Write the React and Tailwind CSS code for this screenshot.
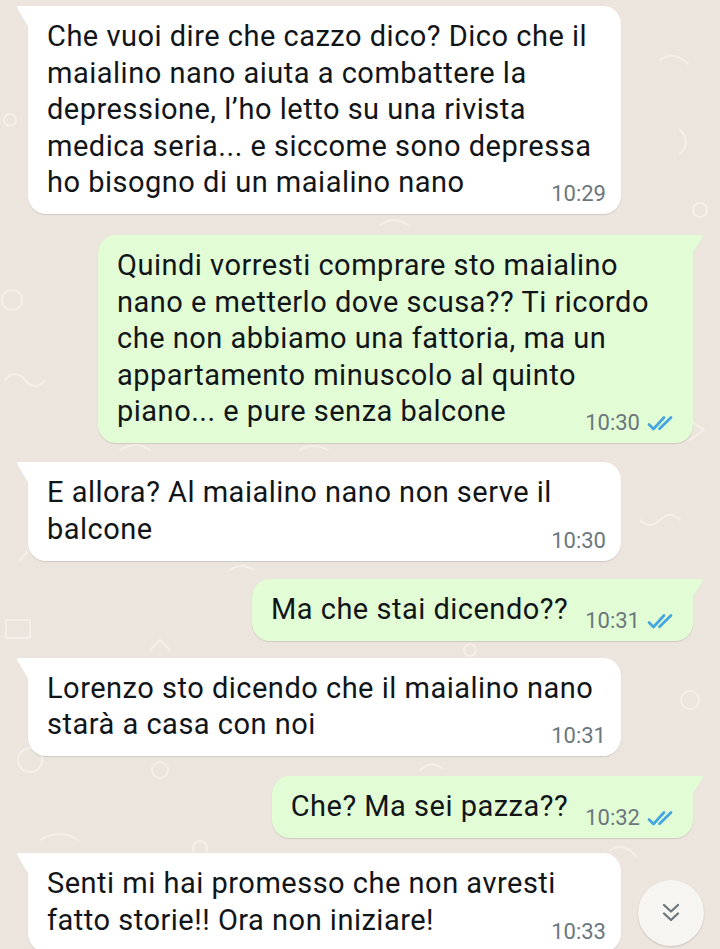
import React from 'react';

const messages = [
    {
        out: false,
        lines: [
            'Che vuoi dire che cazzo dico? Dico che il',
            'maialino nano aiuta a combattere la',
            'depressione, l’ho letto su una rivista',
            'medica seria... e siccome sono depressa',
            'ho bisogno di un maialino nano',
        ],
        time: '10:29',
        gap: 'mt-[6px]',
    },
    {
        out: true,
        lines: [
            'Quindi vorresti comprare sto maialino',
            'nano e metterlo dove scusa?? Ti ricordo',
            'che non abbiamo una fattoria, ma un',
            'appartamento minuscolo al quinto',
            'piano... e pure senza balcone',
        ],
        time: '10:30',
        gap: 'mt-[21px]',
    },
    {
        out: false,
        lines: ['E allora? Al maialino nano non serve il', 'balcone'],
        time: '10:30',
        gap: 'mt-[19px]',
    },
    { out: true, lines: ['Ma che stai dicendo??'], time: '10:31', gap: 'mt-[18px]' },
    {
        out: false,
        lines: ['Lorenzo sto dicendo che il maialino nano', 'starà a casa con noi'],
        time: '10:31',
        gap: 'mt-[17px]',
    },
    { out: true, lines: ['Che? Ma sei pazza??'], time: '10:32', gap: 'mt-[20px]' },
    {
        out: false,
        lines: ['Senti mi hai promesso che non avresti', 'fatto storie!! Ora non iniziare!'],
        time: '10:33',
        gap: 'mt-[15px]',
    },
];

const Ticks = () => (
    <svg width="31" height="18" viewBox="0 0 31 18" className="shrink-0">
        <path d="M2 10.5 L6.5 15 L17 3.5" fill="none" stroke="#43a6de" strokeWidth="2.7" strokeLinecap="round" strokeLinejoin="round" />
        <path d="M12.5 14.8 L24 3.5" fill="none" stroke="#43a6de" strokeWidth="2.7" strokeLinecap="round" />
    </svg>
);

const Tail = ({ out }) =>
    out ? (
        <svg width="13" height="20" viewBox="0 0 13 20" className="absolute top-0 -right-[11px]">
            <path d="M0 0 H10 Q13 0 11.5 2.5 L0 20 Z" fill="#e2fcd5" />
        </svg>
    ) : (
        <svg width="13" height="22" viewBox="0 0 13 22" className="absolute top-0 -left-[12px]">
            <path d="M13 0 H3 Q0 0 1.5 2.5 L13 22 Z" fill="#ffffff" />
        </svg>
    );

const Bubble = ({ msg }) => {
    const single = msg.lines.length === 1;
    const last = msg.lines[msg.lines.length - 1];
    const rest = msg.lines.slice(0, -1);

    return (
        <div
            className={`relative shadow-[0_1px_1px_rgba(0,0,0,0.12)] rounded-[18px] pt-[12px] pb-[8px] pl-[19px] pr-[15px] ${
                msg.out
                    ? 'bg-[#e2fcd5] rounded-tr-none self-end mr-[27px]'
                    : 'bg-white rounded-tl-none self-start ml-[28px] w-[593px]'
            } ${msg.out && !single ? 'w-[595px]' : ''}`}
        >
            <Tail out={msg.out} />
            {rest.map((line) => (
                <div key={line} className="whitespace-nowrap leading-[36.5px]">
                    {line}
                </div>
            ))}
            <div className="flex items-start">
                <div className="whitespace-nowrap leading-[36.5px]">{last}</div>
                <div className={`ml-auto flex items-center gap-[7px] pt-[18px] ${single ? 'pl-[17px]' : ''}`}>
                    <span className="text-[22px] leading-[24px] tracking-normal text-[#6b777d]">{msg.time}</span>
                    {msg.out && <Ticks />}
                </div>
            </div>
        </div>
    );
};

const Doodles = () => (
    <svg width="720" height="949" className="absolute inset-0" fill="none" stroke="#f4efe8" strokeWidth="2" strokeLinecap="round">
        <circle cx="12" cy="300" r="10" />
        <path d="M5 380 q10 -12 20 0 t20 0" />
        <path d="M640 330 l20 -14 l14 22 z" />
        <circle cx="700" cy="210" r="7" />
        <path d="M660 60 q14 -10 28 4" />
        <circle cx="30" cy="760" r="12" />
        <path d="M6 620 h24 v18 h-24 z" />
        <path d="M640 520 q10 10 20 0 q10 -10 20 0" />
        <circle cx="690" cy="700" r="9" />
        <path d="M230 570 q12 -8 24 0" />
        <path d="M150 650 l10 -10 l10 10" />
        <circle cx="470" cy="650" r="6" />
        <path d="M120 450 q16 -10 30 0" />
        <path d="M420 770 q10 -10 22 -2" />
        <path d="M690 420 l14 10 l-14 10" />
        <circle cx="10" cy="120" r="6" />
        <path d="M40 840 q20 -12 38 0" />
        <path d="M610 850 q14 -8 26 6" />
        <circle cx="160" cy="770" r="8" />
        <path d="M380 225 q14 -10 28 0" />
        <path d="M680 130 q12 12 0 24" />
        <path d="M20 560 l12 -14 l10 12" />
        <circle cx="200" cy="848" r="7" />
        <path d="M300 450 q14 -8 28 0" />
    </svg>
);

export default function App() {
    return (
        <div
            className="relative w-[720px] h-[949px] overflow-hidden bg-[#ece5dd] text-[29px] tracking-[0.5px] text-[#111518]"
            style={{ fontFamily: 'Roboto, "Noto Sans", sans-serif' }}
        >
            <Doodles />
            <div className="relative flex flex-col">
                {messages.map((msg, i) => (
                    <div key={i} className={`flex flex-col ${msg.gap}`}>
                        <Bubble msg={msg} />
                    </div>
                ))}
            </div>
            <div className="absolute left-[638px] top-[880px] w-[66px] h-[66px] rounded-full bg-[#f7f5f2] shadow-[0_1px_2px_rgba(0,0,0,0.15)] flex items-center justify-center">
                <svg width="22" height="24" viewBox="0 0 22 24" fill="none" stroke="#6b777d" strokeWidth="2.3" strokeLinecap="round" strokeLinejoin="round">
                    <path d="M4 4 L11 10.5 L18 4" />
                    <path d="M4 12.5 L11 19 L18 12.5" />
                </svg>
            </div>
        </div>
    );
}
